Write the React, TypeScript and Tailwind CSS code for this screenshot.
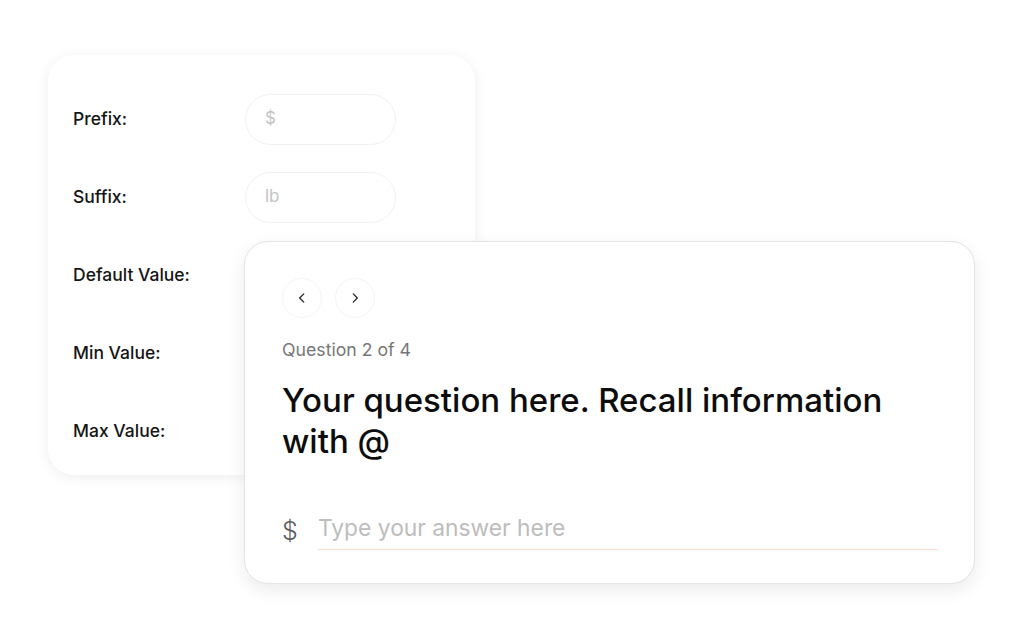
import React from "react";

function Chevron({ dir }: { dir: "left" | "right" }) {
  return (
    <svg width="14" height="14" viewBox="0 0 24 24" fill="none" stroke="#222" strokeWidth="2.2" strokeLinecap="round" strokeLinejoin="round">
      {dir === "left" ? <path d="M15 5l-7 7 7 7" /> : <path d="M9 5l7 7-7 7" />}
    </svg>
  );
}

export default function App() {
  const rows: { label: string; placeholder?: string }[] = [
    { label: "Prefix:", placeholder: "$" },
    { label: "Suffix:", placeholder: "lb" },
    { label: "Default Value:" },
    { label: "Min Value:" },
    { label: "Max Value:" },
  ];
  return (
    <div className="relative w-[1024px] h-[639px] bg-white overflow-hidden" style={{ fontFamily: "Inter, 'Noto Sans', sans-serif" }}>
      <div className="absolute left-[48px] top-[55px] w-[427px] h-[420px] rounded-[26px] bg-white shadow-[0_2px_14px_rgba(0,0,0,0.07)] pl-[25px] pt-[38px] flex flex-col gap-[26px]">
        {rows.map((r) => (
          <div key={r.label} className="flex items-center h-[52px]">
            <div className="w-[172px] text-[17.5px] font-medium text-[#151515]">{r.label}</div>
            {r.placeholder && (
              <div className="w-[151px] h-[51px] rounded-full border border-[#f1f1f1] flex items-center pl-[19px] text-[17px] text-[#c4c4c4]">
                {r.placeholder}
              </div>
            )}
          </div>
        ))}
      </div>

      <div className="absolute left-[244px] top-[241px] w-[731px] h-[343px] rounded-[24px] bg-white border border-[#e4e4e4] shadow-[0_6px_18px_rgba(0,0,0,0.08)] pl-[37px] pr-[36px] pt-[36px]">
        <div className="flex gap-[13px]">
          <div className="w-[40px] h-[40px] rounded-full border border-[#f4f4f4] flex items-center justify-center">
            <Chevron dir="left" />
          </div>
          <div className="w-[40px] h-[40px] rounded-full border border-[#f4f4f4] flex items-center justify-center">
            <Chevron dir="right" />
          </div>
        </div>
        <div className="mt-[21px] text-[17.7px] text-[#777] leading-[22px]">Question 2 of 4</div>
        <div className="mt-[19px] text-[33px] font-medium text-[#0d0d0d] leading-[41px] w-[660px]">
          Your question here. Recall information with @
        </div>
        <div className="mt-[51px] flex items-center">
          <div className="w-[36px] text-[25px] font-light text-[#5a5a5a]">$</div>
          <div className="flex-1 border-b border-[#fcdccf] pb-[7px] text-[22.8px] text-[#bdbdbd] leading-[28px]">
            Type your answer here
          </div>
        </div>
      </div>
    </div>
  );
}
